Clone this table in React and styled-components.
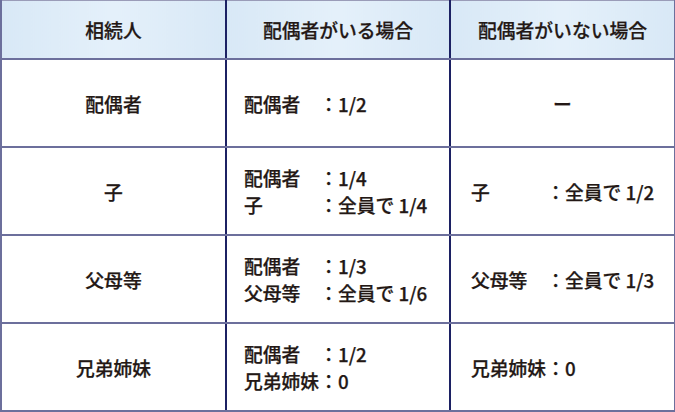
import React from "react";
import styled, { createGlobalStyle } from "styled-components";

const GlobalStyle = createGlobalStyle`
  html, body {
    margin: 0;
    padding: 0;
    background: #ffffff;
  }
  body {
    font-family: "Noto Sans CJK JP", "Noto Sans", sans-serif;
    color: #231815;
  }
`;

const rows = [
  {
    heir: "配偶者",
    withSpouse: [["配偶者", "1/2"]],
    withoutSpouse: null,
  },
  {
    heir: "子",
    withSpouse: [
      ["配偶者", "1/4"],
      ["子", "全員で 1/4"],
    ],
    withoutSpouse: ["子", "全員で 1/2"],
  },
  {
    heir: "父母等",
    withSpouse: [
      ["配偶者", "1/3"],
      ["父母等", "全員で 1/6"],
    ],
    withoutSpouse: ["父母等", "全員で 1/3"],
  },
  {
    heir: "兄弟姉妹",
    withSpouse: [
      ["配偶者", "1/2"],
      ["兄弟姉妹", "0"],
    ],
    withoutSpouse: ["兄弟姉妹", "0"],
  },
];

export default function App() {
  return (
    <>
      <GlobalStyle />
      <Table>
        <colgroup>
          <col style={{ width: 225 }} />
          <col style={{ width: 224 }} />
          <col style={{ width: 225 }} />
        </colgroup>
        <thead>
          <tr>
            <HeadCell>相続人</HeadCell>
            <HeadCell>配偶者がいる場合</HeadCell>
            <HeadCell>配偶者がいない場合</HeadCell>
          </tr>
        </thead>
        <tbody>
          {rows.map((r) => (
            <BodyRow key={r.heir}>
              <CenterCell>{r.heir}</CenterCell>
              <ShareCell $pad={17}>
                {r.withSpouse.map(([who, share]) => (
                  <ShareLine key={who}>
                    <Who>{who}</Who>
                    <span>：{share}</span>
                  </ShareLine>
                ))}
              </ShareCell>
              {r.withoutSpouse ? (
                <ShareCell $pad={20}>
                  <ShareLine>
                    <Who>{r.withoutSpouse[0]}</Who>
                    <span>：{r.withoutSpouse[1]}</span>
                  </ShareLine>
                </ShareCell>
              ) : (
                <CenterCell>ー</CenterCell>
              )}
            </BodyRow>
          ))}
        </tbody>
      </Table>
    </>
  );
}

const Table = styled.table`
  width: 674px;
  border-collapse: collapse;
  table-layout: fixed;
  font-size: 18.8px;
  font-weight: 500;
  -webkit-text-stroke: 0.25px #231815;
  border-top: 1px solid #9a9cb8;
  border-left: 2px solid #6c6f9c;
  border-right: 2px solid #6c6f9c;
`;

const HeadCell = styled.th`
  height: 57px;
  padding: 0;
  font-weight: 500;
  text-align: center;
  background: linear-gradient(90deg, #d8e8f6 0%, #e4f0fa 50%, #d8e8f6 100%);
  border-bottom: 2px solid #6c6f9c;
  border-right: 2px solid #1c2163;
  &:last-child {
    border-right: none;
  }
`;

const BodyRow = styled.tr`
  height: 88px;
  td {
    border-bottom: 2px solid #6c6f9c;
    border-right: 2px solid #1c2163;
  }
  td:last-child {
    border-right: none;
  }
`;

const CenterCell = styled.td`
  padding: 0;
  text-align: center;
  vertical-align: middle;
`;

const ShareCell = styled.td`
  padding: 0 0 0 ${(p) => p.$pad}px;
  vertical-align: middle;
`;

const ShareLine = styled.div`
  display: flex;
  line-height: 27px;
  white-space: nowrap;
`;

const Who = styled.span`
  width: 4em;
  flex: none;
`;
